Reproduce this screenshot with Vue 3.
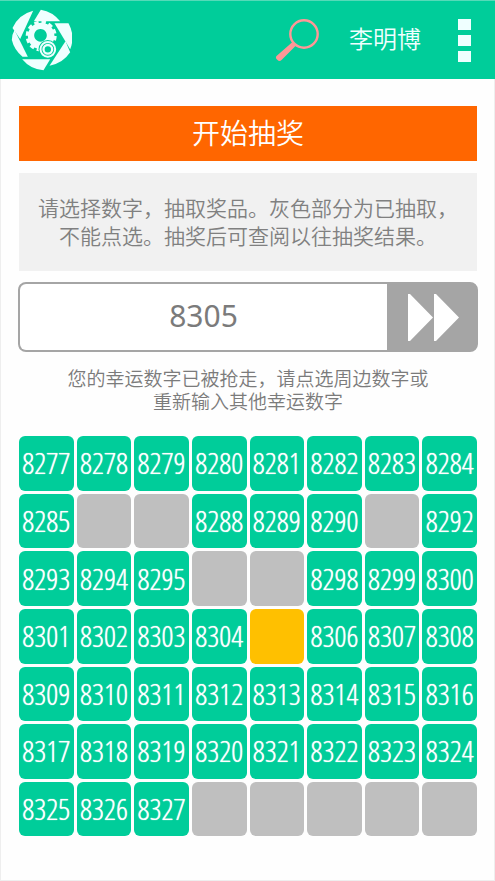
<script setup>
import { ref } from 'vue'

const first = 8277
const last = 8327
const taken = [8286, 8287, 8291, 8296, 8297]
const lucky = ref('8305')

const cells = Array.from({ length: 56 }, (_, i) => {
  const number = first + i
  if (number === 8305) return { number, state: 'picked' }
  if (number > last || taken.includes(number)) return { number, state: 'taken' }
  return { number, state: 'open' }
})
</script>

<template>
  <div class="page">
    <header class="bar">
      <a class="logo" href="#" aria-label="首页">
        <svg viewBox="34 25 182 186" width="61" height="62">
          <g fill="#efffff">
            <path d="M123 27A92 92 0 0 1 181 62H102Z" />
            <path d="M38 82A92 92 0 0 1 100 30L61 115Z" />
            <path d="M44 88L84 168H68A92 92 0 0 1 36 118Q36 102 44 88Z" />
            <path d="M67 176H151L131 209A92 92 0 0 1 67 176Z" />
            <path d="M197 122L211 155A92 92 0 0 1 149 195Z" />
            <path d="M164 68H206A92 92 0 0 1 211 146Z" />
            <path fill-rule="evenodd" d="M124 66a40 40 0 1 0 .1 0ZM122 85a19 19 0 1 1-.1 0Z" />
          </g>
          <circle cx="124" cy="106" r="42" fill="none" stroke="#efffff" stroke-width="9" pathLength="120" stroke-dasharray="6 4" />
          <circle cx="144" cy="146" r="28" fill="#00cd9a" />
          <circle cx="144" cy="146" r="22" fill="none" stroke="#efffff" stroke-width="6" />
          <circle cx="144" cy="146" r="13" fill="none" stroke="#efffff" stroke-width="7" />
        </svg>
      </a>
      <button class="icon search" type="button" aria-label="搜索">
        <svg viewBox="0 0 46 46" width="46" height="46">
          <circle cx="29" cy="17" r="13.7" fill="none" stroke="#ff9797" stroke-width="2.4" />
          <path d="M17.500 25L21 28.500L6.500 43Q4.500 45 2.300 42.700Q-.2 40.500 1.800 38.700Z" fill="#ff9797" />
        </svg>
      </button>
      <a class="user" href="#">李明博</a>
      <button class="icon menu" type="button" aria-label="菜单">
        <svg viewBox="0 0 13 43" width="13" height="43" fill="#efffff">
          <path d="M0 0H13V11H0ZM0 16H13V27H0ZM0 32H13V43H0Z" />
        </svg>
      </button>
    </header>

    <main class="content">
      <button class="start" type="button">开始抽奖</button>
      <p class="note">请选择数字，抽取奖品。灰色部分为已抽取，<br />不能点选。抽奖后可查阅以往抽奖结果。</p>
      <form class="pick" @submit.prevent>
        <input v-model="lucky" class="field" type="text" inputmode="numeric" aria-label="幸运数字" />
        <button class="go" type="submit" aria-label="确定">
          <svg viewBox="0 0 52 49" width="52" height="49" fill="#fff">
            <path d="M1 1H3L26 24.500L3 48H1ZM27 1H29L52 24.500L29 48H27Z" />
          </svg>
        </button>
      </form>
      <p class="hint">您的幸运数字已被抢走，请点选周边数字或<br />重新输入其他幸运数字</p>
      <div class="grid">
        <button
          v-for="cell in cells"
          :key="cell.number"
          type="button"
          class="cell"
          :class="cell.state"
          :disabled="cell.state === 'taken'"
        >{{ cell.state === 'open' ? cell.number : '' }}</button>
      </div>
    </main>
  </div>
</template>

<style>
body {
  margin: 0;
  background: #fff;
}
</style>

<style scoped>
.page {
  box-sizing: border-box;
  min-height: 100vh;
  border: 1px solid #eee;
  border-top: 0;
  background: #fefefe;
  font-family: "Noto Sans", "Noto Sans CJK SC", sans-serif;
}
button,
input {
  margin: 0;
  padding: 0;
  border: 0;
  font-family: inherit;
}
.bar {
  display: flex;
  align-items: center;
  box-sizing: border-box;
  height: 79px;
  margin: 0 -1px;
  padding: 0 24px 0 11px;
  border-top: 1px solid #55dab8;
  background: #00cd9a;
}
.logo {
  display: flex;
  margin-right: auto;
}
.icon {
  display: flex;
  background: none;
}
.user {
  margin: 0 37px 0 28px;
  padding-bottom: 4px;
  color: #efffff;
  font: 350 24px/32px "Noto Sans CJK SC", sans-serif;
  text-decoration: none;
}
.content {
  padding: 27px 17px 41px 18px;
}
.start {
  display: block;
  width: 100%;
  height: 55px;
  padding-bottom: 3px;
  background: #ff6600;
  color: #fff;
  font: 350 28px/40px "Noto Sans CJK SC", sans-serif;
}
.note {
  margin: 12px 0 11px;
  padding: 20px 0 22px;
  background: #f1f1f1;
  color: #808080;
  font: 350 21px/28px "Noto Sans CJK SC", sans-serif;
  text-align: center;
  white-space: nowrap;
}
.pick {
  display: flex;
  height: 66px;
  margin: 0 -1px;
  border: 2px solid #a5a5a5;
  border-radius: 8px;
  background: #a5a5a5;
}
.field {
  flex: 1;
  min-width: 0;
  padding-bottom: 3px;
  border-radius: 6px 0 0 6px;
  background: #fff;
  color: #7b7b7b;
  font-size: 30px;
  text-align: center;
}
.go {
  display: flex;
  align-items: center;
  justify-content: center;
  width: 89px;
  padding-left: 2px;
  background: none;
}
.hint {
  margin: 14px 0 24px;
  color: #7b7b7b;
  font: 350 19px/23px "Noto Sans CJK SC", sans-serif;
  text-align: center;
  white-space: nowrap;
}
.grid {
  display: grid;
  grid-template-columns: repeat(8, 1fr);
  gap: 3px;
}
.cell {
  display: flex;
  align-items: center;
  justify-content: center;
  min-width: 0;
  aspect-ratio: 1;
  border-radius: 6px;
  color: #fff;
  font: 400 30px/36px "Open Sans Condensed Light", "Noto Sans CJK SC", sans-serif;
  text-shadow: 0 0 1px #fff;
}
.open {
  background: #00cd9a;
}
.taken {
  background: #bfbfbf;
}
.picked {
  background: #ffc000;
}
</style>
